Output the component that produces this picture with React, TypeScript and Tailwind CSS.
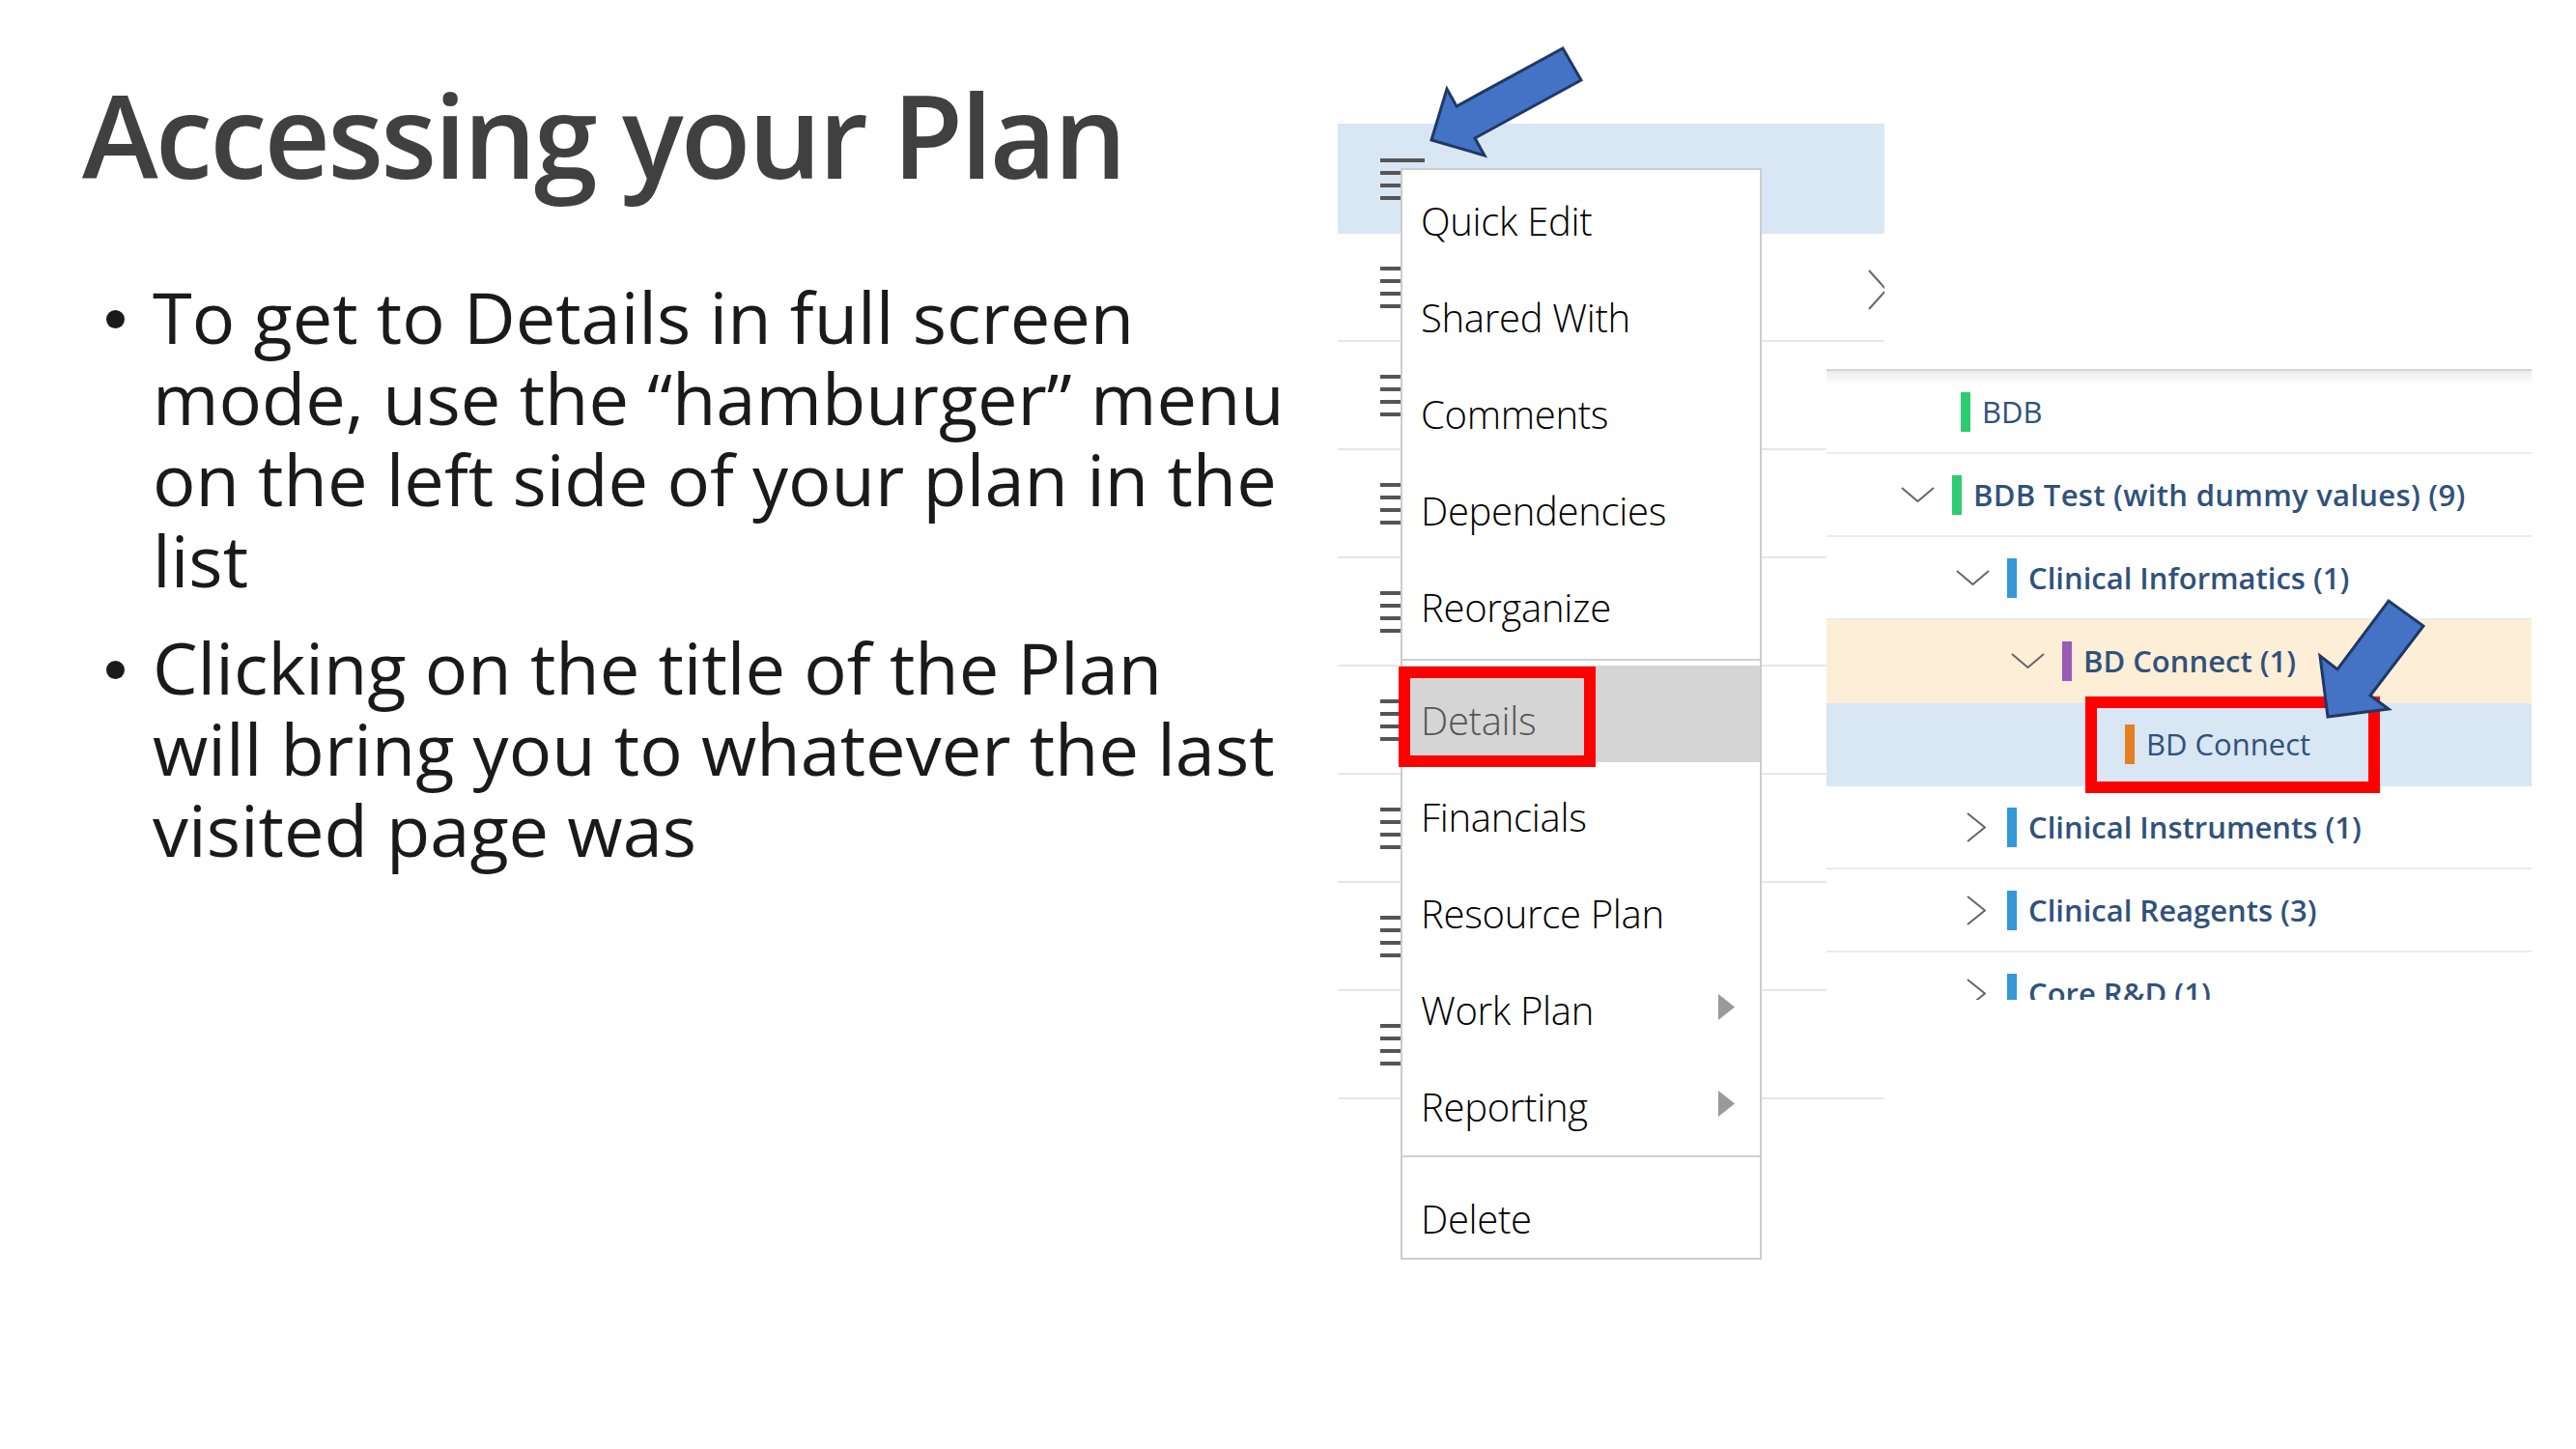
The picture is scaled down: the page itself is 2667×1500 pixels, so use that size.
import React from 'react';

type TreeRow = {
  label: string;
  pad: string;
  chevron?: 'down' | 'right';
  bar: string;
  bg: string;
  weight: string;
};

const treeRows: TreeRow[] = [
  { label: 'BDB', pad: 'pl-[139px]', bar: 'bg-[#2ecc71]', bg: 'border-[#ebebeb]', weight: 'font-normal' },
  { label: 'BDB Test (with dummy values) (9)', pad: 'pl-[74px]', chevron: 'down', bar: 'bg-[#2ecc71]', bg: 'border-[#ebebeb]', weight: 'font-semibold tracking-[0.3px]' },
  { label: 'Clinical Informatics (1)', pad: 'pl-[131px]', chevron: 'down', bar: 'bg-[#3498db]', bg: 'border-[#ebebeb]', weight: 'font-semibold' },
  { label: 'BD Connect (1)', pad: 'pl-[188px]', chevron: 'down', bar: 'bg-[#9b59b6]', bg: 'bg-[#fdeed8] border-transparent', weight: 'font-semibold' },
  { label: 'BD Connect', pad: 'pl-[309px]', bar: 'bg-[#e67e22]', bg: 'bg-[#d9e6f4] border-transparent', weight: 'font-normal' },
  { label: 'Clinical Instruments (1)', pad: 'pl-[131px]', chevron: 'right', bar: 'bg-[#3498db]', bg: 'border-[#ebebeb]', weight: 'font-semibold' },
  { label: 'Clinical Reagents (3)', pad: 'pl-[131px]', chevron: 'right', bar: 'bg-[#3498db]', bg: 'border-[#ebebeb]', weight: 'font-semibold' },
  { label: 'Core R&D (1)', pad: 'pl-[131px]', chevron: 'right', bar: 'bg-[#3498db]', bg: 'border-[#ebebeb]', weight: 'font-semibold' },
];

const Hamburger = () => (
  <div className="flex flex-col gap-[9px]">
    <div className="h-[4px] w-[46px] bg-[#555]" />
    <div className="h-[4px] w-[46px] bg-[#555]" />
    <div className="h-[4px] w-[46px] bg-[#555]" />
    <div className="h-[4px] w-[46px] bg-[#555]" />
  </div>
);

const SubArrow = () => (
  <svg width="17" height="27" viewBox="0 0 17 27">
    <polygon points="0,0 17,13.5 0,27" fill="#9a9a9a" />
  </svg>
);

const MenuItem = ({
  label,
  sub,
  active,
  low,
}: {
  label: string;
  sub?: boolean;
  active?: boolean;
  low?: boolean;
}) => (
  <div
    className={`flex items-center justify-between h-[100px] pt-[6px] pl-[19px] pr-[26px] ${
      active ? 'bg-[#d5d5d5] text-[#555]' : 'text-black'
    }`}
  >
    <span className={`relative text-[40px] leading-[40px] font-light tracking-[-0.3px] ${low ? 'top-[4px]' : ''}`}>
      {label}
    </span>
    {sub && <SubArrow />}
  </div>
);

const Tree = () => (
  <div className="relative -ml-[60px] mt-[382px] w-[730px] h-[653px] shrink-0 overflow-hidden bg-white border-t-2 border-[#d4d4d4]">
    <div className="absolute left-0 right-0 top-0 h-[14px] bg-linear-to-b from-[#ececec] to-white" />
    {treeRows.map((row) => (
      <div
        key={row.label}
        className={`relative flex items-center h-[86px] border-b-2 ${row.pad} ${row.bg}`}
      >
        {row.chevron === 'down' && (
          <div className="w-[56px] shrink-0 pl-[3px]">
            <svg width="35" height="16" viewBox="0 0 35 16">
              <path d="M1 1 L17.5 15 L34 1" fill="none" stroke="#666" strokeWidth="2" />
            </svg>
          </div>
        )}
        {row.chevron === 'right' && (
          <div className="w-[56px] shrink-0 pl-[14px]">
            <svg width="20" height="31" viewBox="0 0 20 31">
              <path d="M1 1 L19 15.5 L1 30" fill="none" stroke="#666" strokeWidth="2" />
            </svg>
          </div>
        )}
        <div className={`w-[10px] h-[41px] shrink-0 ${row.bar}`} />
        <span className={`ml-[12px] text-[31px] leading-[31px] text-[#30527a] whitespace-nowrap ${row.weight}`}>
          {row.label}
        </span>
      </div>
    ))}
  </div>
);

const PlanList = () => (
  <div className="w-[566px] mt-[128px] shrink-0 overflow-hidden">
    <div className="flex items-center h-[114px] pl-[44px] bg-[#d9e6f4]">
      <Hamburger />
    </div>
    {Array.from({ length: 8 }).map((_, i) => (
      <div
        key={i}
        className="flex items-center justify-between h-[112px] pl-[44px] border-b-2 border-[#e6e6e6]"
      >
        <Hamburger />
        {i === 0 && (
          <svg width="20" height="42" viewBox="0 0 20 42" className="-mr-[3px] mt-[6px]">
            <path d="M1 1 L19 21 L1 41" fill="none" stroke="#666" strokeWidth="2" />
          </svg>
        )}
      </div>
    ))}
  </div>
);

const ContextMenu = () => (
  <div className="absolute left-[65px] top-[174px] w-[374px] bg-white border-2 border-[#cccccc] z-10">
    <MenuItem label="Quick Edit" />
    <MenuItem label="Shared With" />
    <MenuItem label="Comments" />
    <MenuItem label="Dependencies" />
    <MenuItem label="Reorganize" />
    <div className="h-[13px] flex items-center">
      <div className="h-[2px] w-full bg-[#d0d0d0]" />
    </div>
    <MenuItem label="Details" active low />
    <MenuItem label="Financials" low />
    <MenuItem label="Resource Plan" low />
    <MenuItem label="Work Plan" sub low />
    <MenuItem label="Reporting" sub low />
    <div className="h-[16px] flex items-center">
      <div className="h-[2px] w-full bg-[#d0d0d0]" />
    </div>
    <div className="h-[97px]">
      <MenuItem label="Delete" low />
    </div>
  </div>
);

export default function App() {
  return (
    <div className="relative flex w-[2667px] h-[1500px] overflow-hidden bg-white font-['Open_Sans',sans-serif]">
      {/* slide text */}
      <div className="w-[1385px] shrink-0">
        <h1 className="pl-[85px] pt-[80px] text-[119px] leading-[119px] font-semibold tracking-[-2.8px] text-[#404040] whitespace-nowrap">
          Accessing your Plan
        </h1>
        <div className="mt-[87px] pl-[110px] text-[74px] leading-[84px] text-[#1a1a1a] whitespace-nowrap">
          <div className="flex">
            <div className="w-[48px] shrink-0 pt-[35px]">
              <div className="w-[19px] h-[19px] rounded-full bg-[#1a1a1a]" />
            </div>
            <div>
              <div>To get to Details in full screen</div>
              <div>mode, use the “hamburger” menu</div>
              <div>on the left side of your plan in the</div>
              <div>list</div>
            </div>
          </div>
          <div className="flex mt-[27px]">
            <div className="w-[48px] shrink-0 pt-[35px]">
              <div className="w-[19px] h-[19px] rounded-full bg-[#1a1a1a]" />
            </div>
            <div>
              <div>Clicking on the title of the Plan</div>
              <div>will bring you to whatever the last</div>
              <div>visited page was</div>
            </div>
          </div>
        </div>
      </div>

      {/* app screenshot collage */}
      <div className="relative flex items-start flex-1">
        <PlanList />
        <Tree />
        <ContextMenu />
      </div>

      {/* callouts */}
      <div className="absolute left-[1448px] top-[690px] w-[204px] h-[104px] border-[12px] border-[#ff0000] z-20" />
      <div className="absolute left-[2159px] top-[721px] w-[305px] h-[100px] border-[12px] border-[#ff0000] z-20" />
      <svg className="absolute inset-0 z-30 pointer-events-none" width="2667" height="1500" viewBox="0 0 2667 1500">
        <polygon
          points="1482,145 1498,92 1508,110 1618,50 1637,83 1527,143 1537,161"
          fill="#4472c4"
          stroke="#1f3864"
          strokeWidth="3"
        />
        <polygon
          points="2410,742 2402,679 2420,693 2473,622 2509,648 2454,720 2473,734"
          fill="#4472c4"
          stroke="#1f3864"
          strokeWidth="3"
        />
      </svg>
    </div>
  );
}
